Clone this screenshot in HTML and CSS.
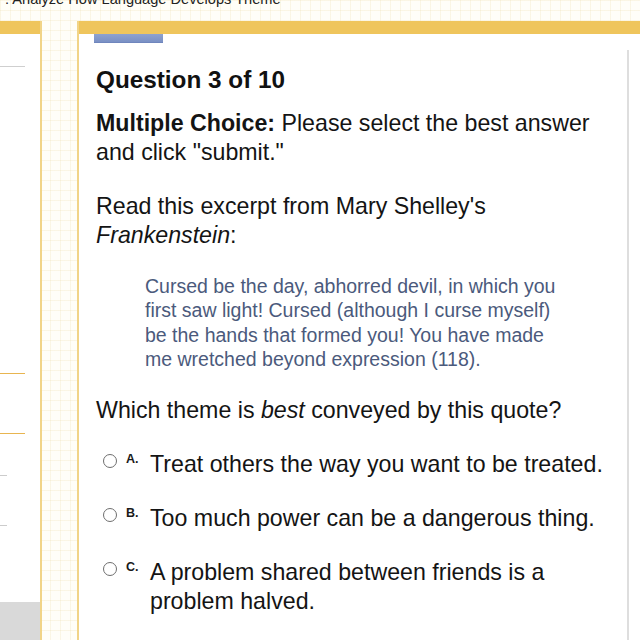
FILE: index.html
```html
<!DOCTYPE html>
<html lang="en">
<head>
<meta charset="utf-8">
<title>Question 3 of 10</title>
<link rel="stylesheet" href="styles.css">
</head>
<body>
<div class="page">
  <div class="topbar">
    <div class="crumb">: Analyze How Language Develops Theme</div>
  </div>
  <div class="frames">
    <aside class="side">
      <div class="band"></div>
      <div class="side-line grey first"></div>
      <div class="side-line gold l2"></div>
      <div class="side-line gold l3"></div>
      <div class="side-line short l4"></div>
      <div class="side-line short l5"></div>
      <div class="side-box"></div>
    </aside>
    <main class="panel">
      <div class="band"></div>
      <div class="panel-body">
        <div class="content">
          <div class="submit"><span class="submit-text">SUBMIT</span></div>
          <h1 class="q-title">Question 3 of 10</h1>
          <p class="para instr"><b>Multiple Choice:</b> Please select the best answer and click "submit."</p>
          <p class="para read">Read this excerpt from Mary Shelley's <i>Frankenstein</i>:</p>
          <blockquote class="quote">Cursed be the day, abhorred devil, in which you first saw light! Cursed (although I curse myself) be the hands that formed you! You have made me wretched beyond expression (118).</blockquote>
          <p class="para which">Which theme is <i>best</i> conveyed by this quote?</p>
          <div class="options">
            <div class="option"><span class="radio"></span><span class="letter">A.</span><span class="opt-text">Treat others the way you want to be treated.</span></div>
            <div class="option"><span class="radio"></span><span class="letter">B.</span><span class="opt-text">Too much power can be a dangerous thing.</span></div>
            <div class="option"><span class="radio"></span><span class="letter">C.</span><span class="opt-text">A problem shared between friends is a problem halved.</span></div>
          </div>
        </div>
        <div class="scrollbar"></div>
      </div>
    </main>
  </div>
</div>
</body>
</html>
```

FILE: styles.css
```css
* { box-sizing: border-box; }
html, body { margin: 0; padding: 0; }
body {
  width: 640px;
  height: 640px;
  overflow: hidden;
  font-family: "Liberation Sans", Arial, sans-serif;
  color: #141414;
  background-color: #fffef8;
  background-image:
    linear-gradient(to right, rgba(240, 226, 178, 0.28) 1px, transparent 1px),
    linear-gradient(to bottom, rgba(240, 226, 178, 0.28) 1px, transparent 1px);
  background-size: 10px 10px;
}
.page { display: flex; flex-direction: column; height: 640px; }
.topbar { height: 21px; flex: none; padding-left: 5px; }
.crumb {
  font-size: 14.6px;
  line-height: 15px;
  margin-top: -8px;
  color: #222;
  white-space: nowrap;
}
.frames { display: flex; flex: 1; gap: 35px; min-height: 0; }
.band { height: 13px; background: #efc55c; flex: none; }

.side {
  width: 42px;
  flex: none;
  background: #fff;
  border-right: 2px solid #f1d488;
  display: flex;
  flex-direction: column;
}
.side-line { height: 1px; width: 25px; flex: none; }
.side-line.grey { background: #cfcfcf; margin-top: 32px; }
.side-line.gold { background: #e8b550; }
.side-line.l2 { margin-top: 306px; }
.side-line.l3 { margin-top: 59px; }
.side-line.short { width: 7px; background: #cccccc; }
.side-line.l4 { margin-top: 41px; }
.side-line.l5 { margin-top: 49px; }
.side-box { margin-top: 76px; flex: 1; background: #d9d9d9; }

.panel {
  flex: 1;
  background: #fff;
  border-left: 2px solid #f1d488;
  display: flex;
  flex-direction: column;
}
.panel-body { display: flex; flex: 1; }
.content { flex: 1; padding-left: 17px; padding-right: 15px; }
.scrollbar {
  width: 2px;
  flex: none;
  margin-top: 16px;
  margin-right: 11px;
  background: #dedede;
}

.submit {
  margin-left: -2px;
  width: 69px;
  height: 9px;
  overflow: hidden;
  background: linear-gradient(#8ea2cf, #7a90c4);
  border-bottom: 1px solid #6f86bd;
  text-align: center;
}
.submit-text {
  display: block;
  margin-top: -11px;
  font-size: 11px;
  line-height: 14px;
  font-weight: bold;
  color: #b9c6e4;
  letter-spacing: 1px;
}

.q-title {
  margin: 23px 0 0;
  font-size: 24.3px;
  line-height: 28px;
  font-weight: bold;
  color: #111;
}
.para {
  margin: 0;
  font-size: 23.2px;
  line-height: 29px;
  color: #141414;
}
.instr { margin-top: 15px; }
.read { margin-top: 25px; }
.quote {
  margin: 24px 0 0;
  padding-left: 49px;
  width: 469px;
  font-size: 19.5px;
  line-height: 24.3px;
  color: #4b5a7c;
}
.which { margin-top: 25px; }
.options { display: flex; flex-direction: column; gap: 25px; margin-top: 25px; }
.option { display: flex; align-items: flex-start; padding-left: 7px; }
.radio {
  flex: none;
  width: 14px;
  height: 14px;
  margin-top: 4px;
  border: 1.6px solid #6e6e6e;
  border-radius: 50%;
  background: #fff;
}
.letter {
  flex: none;
  width: 24px;
  margin-left: 9px;
  margin-top: 3px;
  font-size: 12.5px;
  line-height: 12px;
  font-weight: bold;
  color: #1a1a1a;
}
.opt-text {
  flex: 1;
  font-size: 23.2px;
  line-height: 29px;
  color: #141414;
}
```
